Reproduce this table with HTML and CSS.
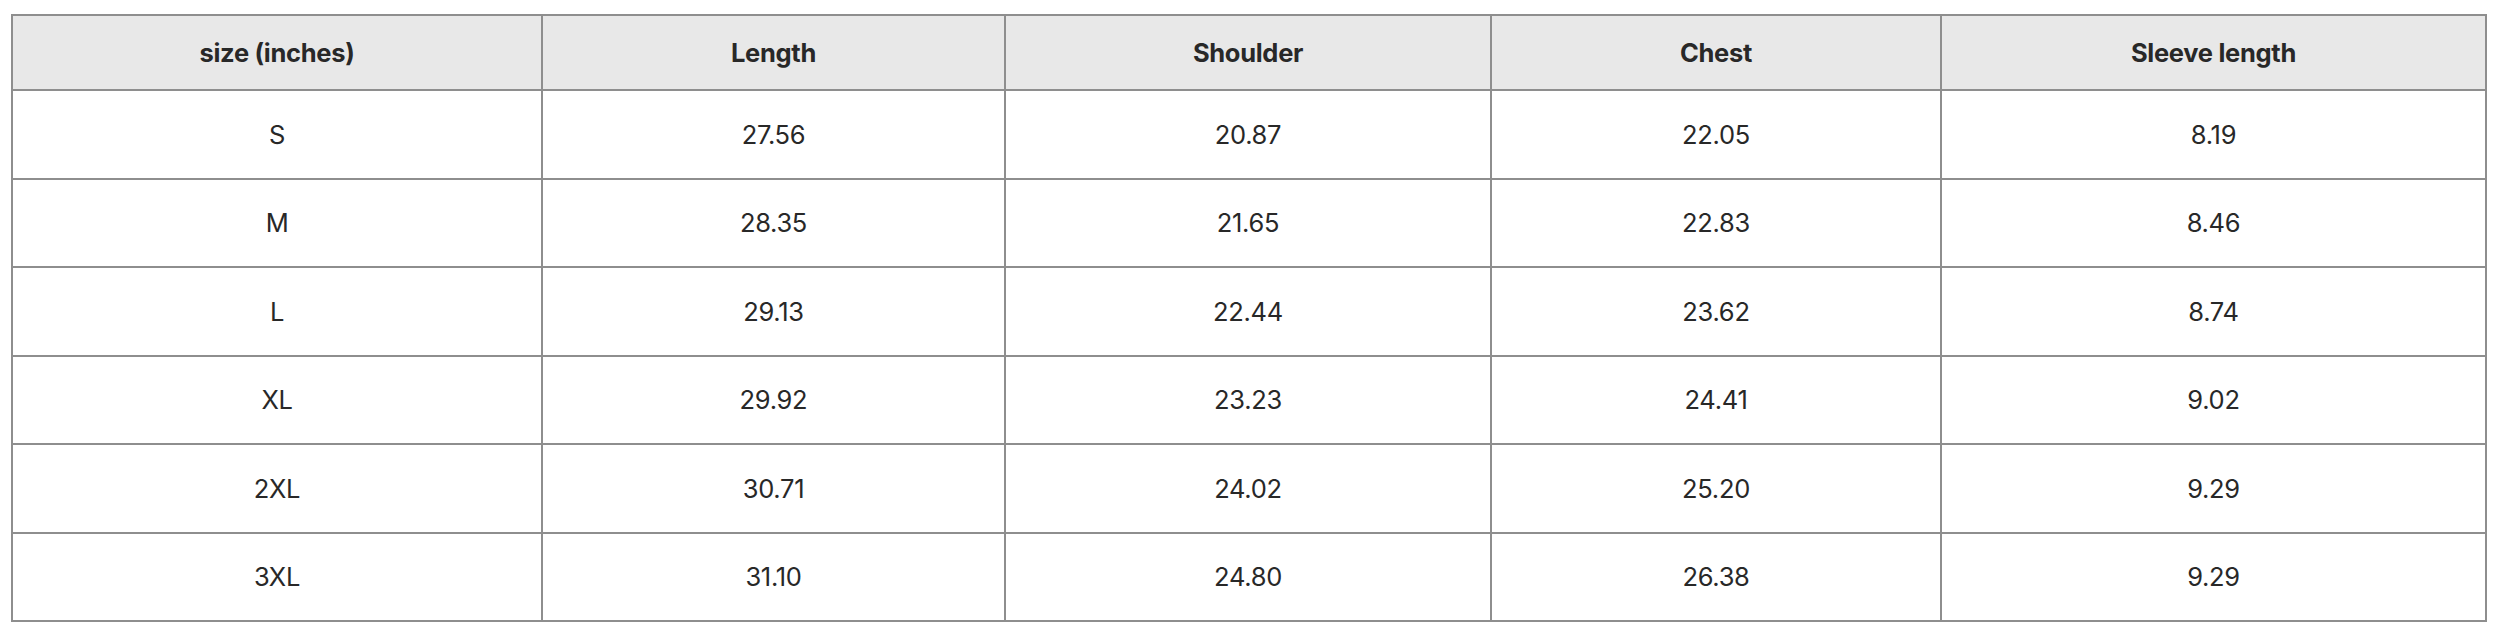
FILE: index.html
```html
<!DOCTYPE html>
<html lang="en">
<head>
<meta charset="utf-8">
<title>Size chart</title>
<link rel="stylesheet" href="styles.css">
</head>
<body>
<div class="wrap">
<table class="size-table">
  <colgroup>
    <col class="c1"><col class="c2"><col class="c3"><col class="c4"><col class="c5">
  </colgroup>
  <thead>
    <tr><th>size (inches)</th><th>Length</th><th>Shoulder</th><th>Chest</th><th>Sleeve length</th></tr>
  </thead>
  <tbody>
    <tr><td>S</td><td>27.56</td><td>20.87</td><td>22.05</td><td>8.19</td></tr>
    <tr><td>M</td><td>28.35</td><td>21.65</td><td>22.83</td><td>8.46</td></tr>
    <tr><td>L</td><td>29.13</td><td>22.44</td><td>23.62</td><td>8.74</td></tr>
    <tr><td>XL</td><td>29.92</td><td>23.23</td><td>24.41</td><td>9.02</td></tr>
    <tr><td>2XL</td><td>30.71</td><td>24.02</td><td>25.20</td><td>9.29</td></tr>
    <tr><td>3XL</td><td>31.10</td><td>24.80</td><td>26.38</td><td>9.29</td></tr>
  </tbody>
</table>
</div>
</body>
</html>
```

FILE: styles.css
```css
html, body {
  margin: 0;
  padding: 0;
  background: #ffffff;
}

.wrap {
  padding: 14px 0 0 11px;
}

.size-table {
  border-collapse: collapse;
  table-layout: fixed;
  width: 2474px;
  font-family: Inter, "Noto Sans", sans-serif;
  color: #282828;
  font-size: 25.5px;
  letter-spacing: -0.3px;
}

.c1 { width: 530px; }
.c2 { width: 463px; }
.c3 { width: 486px; }
.c4 { width: 450px; }
.c5 { width: 545px; }

.size-table thead tr { height: 75px; }
.size-table tbody tr { height: 88.5px; }

.size-table th,
.size-table td {
  border: 2px solid #8e8e8e;
  text-align: center;
  vertical-align: middle;
  padding: 0;
}

.size-table th {
  background: #e8e8e8;
  font-weight: 650;
}

.size-table td {
  font-weight: 400;
}
```
